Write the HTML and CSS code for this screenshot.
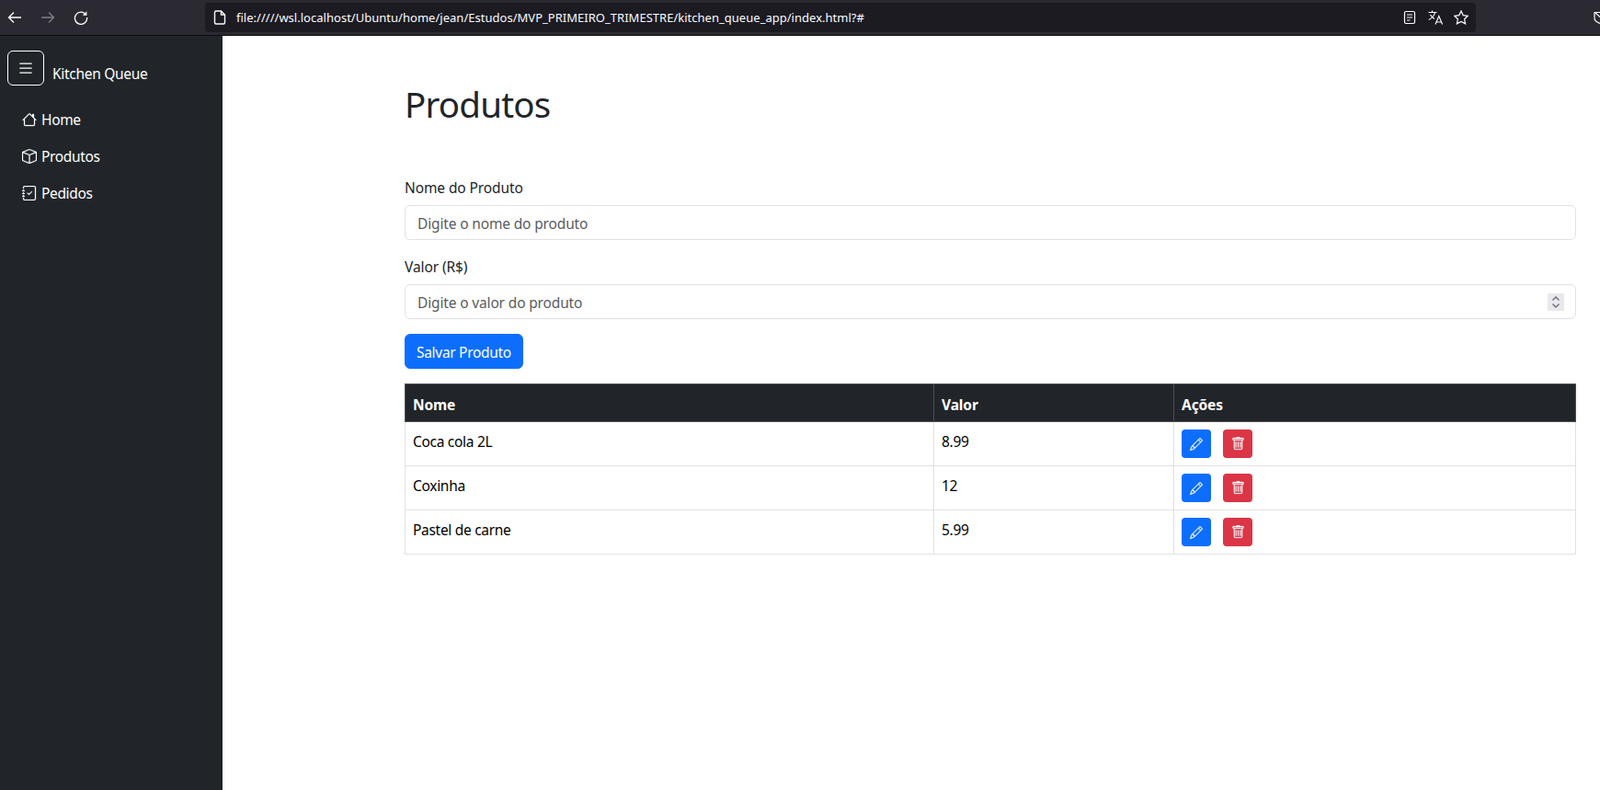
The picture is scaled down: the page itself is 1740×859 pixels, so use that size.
FILE: index.html
```html
<!DOCTYPE html>
<html lang="pt-BR">
<head>
    <meta charset="UTF-8">
    <title>Kitchen Queue</title>
    <link rel="stylesheet" href="styles.css">
</head>
<body>
    <header class="browser-bar">
        <div class="browser-nav">
            <svg class="nav-icon" viewBox="0 0 16 16" fill="none" stroke="currentColor" stroke-width="1.3"><path d="M15 8H1.5M7 2.5 1.5 8 7 13.5"/></svg>
            <svg class="nav-icon disabled" viewBox="0 0 16 16" fill="none" stroke="currentColor" stroke-width="1.3"><path d="M1 8h13.5M9 2.5 14.5 8 9 13.5"/></svg>
            <svg class="nav-icon" viewBox="0 0 16 16" fill="none" stroke="currentColor" stroke-width="1.3"><path d="M13.6 5.2A6.6 6.6 0 1 0 14.6 8"/><path d="M14.4 1.2v4.6H9.8z" fill="currentColor" stroke="none"/></svg>
        </div>
        <div class="url-bar">
            <svg class="page-icon" viewBox="0 0 16 16" fill="none" stroke="currentColor" stroke-width="1.4"><path d="M2.500 2.500a1.500 1.500 0 0 1 1.500-1.500h5.500L13.500 5v8.500a1.500 1.500 0 0 1-1.500 1.500H4a1.500 1.500 0 0 1-1.500-1.500z"/><path d="M9.500 1v4h4"/></svg>
            <span class="url-text">file://///wsl.localhost/Ubuntu/home/jean/Estudos/MVP_PRIMEIRO_TRIMESTRE/kitchen_queue_app/index.html?#</span>
            <div class="url-actions">
                <svg class="url-icon" viewBox="0 0 16 16" fill="none" stroke="currentColor" stroke-width="1.2"><rect x="2.500" y="1.500" width="11" height="13" rx="1.500"/><path d="M5 5h6M5 8h6M5 11h3.500"/></svg>
                <svg class="url-icon" viewBox="0 0 16 16" fill="none" stroke="currentColor" stroke-width="1.2"><path d="M0.500 2.500h9M4.500 0.500v2M7.500 2.500C6.800 6 4 9 0.800 10.500M2.500 5c1 2 2.500 3.500 4.500 4.500"/><path d="M8 15.500l3.800-9 3.800 9M9.300 13h5"/></svg>
                <svg class="url-icon" viewBox="0 0 16 16" fill="none" stroke="currentColor" stroke-width="1.2"><path d="M8 .9l2.200 4.700 5.100.7-3.700 3.500 1 5.100L8 12.400l-4.600 2.500 1-5.100L.7 6.300l5.100-.7z"/></svg>
            </div>
        </div>
        <svg class="shield-icon" viewBox="0 0 16 16" fill="none" stroke="currentColor" stroke-width="1.2"><path d="M2 2.500h12v6c0 3-3 5-6 6-3-1-6-3-6-6z"/><path d="M3 3l10 9"/></svg>
    </header>

    <div class="app">
        <aside class="sidebar">
            <div class="brand-row">
                <button class="toggler">
                    <svg viewBox="0 0 16 16" fill="currentColor"><path fill-rule="evenodd" d="M2.500 12a.5.5 0 0 1 .5-.5h10a.5.5 0 0 1 0 1H3a.5.5 0 0 1-.5-.5m0-4a.5.5 0 0 1 .5-.5h10a.5.5 0 0 1 0 1H3a.5.5 0 0 1-.5-.5m0-4a.5.5 0 0 1 .5-.5h10a.5.5 0 0 1 0 1H3a.5.5 0 0 1-.5-.5"/></svg>
                </button>
                <span class="brand">Kitchen Queue</span>
            </div>
            <nav class="side-nav">
                <a href="#" class="side-link">
                    <svg class="bi" viewBox="0 0 16 16" fill="currentColor"><path d="M8.707 1.500a1 1 0 0 0-1.414 0L.646 8.146a.5.5 0 0 0 .708.708L2 8.207V13.500A1.500 1.500 0 0 0 3.500 15h9a1.500 1.500 0 0 0 1.500-1.500V8.207l.646.647a.5.5 0 0 0 .708-.708L13 5.793V2.500a.5.5 0 0 0-.5-.5h-1a.5.5 0 0 0-.5.5v1.293zM13 7.207V13.500a.5.5 0 0 1-.5.5h-9a.5.5 0 0 1-.5-.5V7.207l5-5z"/></svg>
                    Home
                </a>
                <a href="#" class="side-link">
                    <svg class="bi" viewBox="0 0 16 16" fill="currentColor"><path d="M8.186 1.113a.5.5 0 0 0-.372 0L1.846 3.500 8 5.961 14.154 3.500zM15 4.239l-6.500 2.600v7.922l6.500-2.600V4.240zM7.500 14.762V6.838L1 4.239v7.925zM7.443.184a1.500 1.500 0 0 1 1.114 0l7.129 2.852A.5.5 0 0 1 16 3.500v8.662a1 1 0 0 1-.629.928l-7.185 2.874a.5.5 0 0 1-.372 0L.63 13.090a1 1 0 0 1-.63-.928V3.500a.5.5 0 0 1 .314-.464z"/></svg>
                    Produtos
                </a>
                <a href="#" class="side-link">
                    <svg class="bi" viewBox="0 0 16 16" fill="currentColor"><path fill-rule="evenodd" d="M10.854 6.146a.5.5 0 0 1 0 .708l-3 3a.5.5 0 0 1-.708 0l-1.500-1.500a.5.5 0 1 1 .708-.708L7.500 8.793l2.646-2.647a.5.5 0 0 1 .708 0"/><path d="M3 0h10a2 2 0 0 1 2 2v12a2 2 0 0 1-2 2H3a2 2 0 0 1-2-2v-1h1v1a1 1 0 0 0 1 1h10a1 1 0 0 0 1-1V2a1 1 0 0 0-1-1H3a1 1 0 0 0-1 1v1H1V2a2 2 0 0 1 2-2"/><path d="M1 5v-.5a.5.5 0 0 1 1 0V5h.5a.5.5 0 0 1 0 1h-2a.5.5 0 0 1 0-1zm0 3v-.5a.5.5 0 0 1 1 0V8h.5a.5.5 0 0 1 0 1h-2a.5.5 0 0 1 0-1zm0 3v-.5a.5.5 0 0 1 1 0v.5h.5a.5.5 0 0 1 0 1h-2a.5.5 0 0 1 0-1z"/></svg>
                    Pedidos
                </a>
            </nav>
        </aside>

        <main class="content">
            <h1 class="page-title">Produtos</h1>
            <form class="product-form">
                <div class="field">
                    <label class="field-label" for="nome">Nome do Produto</label>
                    <input class="field-input" id="nome" type="text" placeholder="Digite o nome do produto">
                </div>
                <div class="field">
                    <label class="field-label" for="valor">Valor (R$)</label>
                    <div class="input-wrap">
                        <input class="field-input" id="valor" type="text" placeholder="Digite o valor do produto">
                        <span class="spinner">
                            <svg viewBox="0 0 18 18" fill="none" stroke="#6c6c78" stroke-width="1.4"><path d="M5.500 7 9 3.500 12.500 7M5.500 11 9 14.500 12.500 11"/></svg>
                        </span>
                    </div>
                </div>
                <button class="btn-save" type="button">Salvar Produto</button>
            </form>

            <table class="product-table">
                <thead>
                    <tr>
                        <th class="col-name">Nome</th>
                        <th class="col-value">Valor</th>
                        <th>Ações</th>
                    </tr>
                </thead>
                <tbody id="rows"></tbody>
            </table>
        </main>
    </div>

    <script>
        let produtos = [
            { nome: 'Coca cola 2L', valor: '8.99' },
            { nome: 'Coxinha', valor: '12' },
            { nome: 'Pastel de carne', valor: '5.99' }
        ];

        let pencil = '<svg class="bi" viewBox="0 0 16 16" fill="currentColor"><path d="M12.146.146a.5.5 0 0 1 .708 0l3 3a.5.5 0 0 1 0 .708l-10 10a.5.5 0 0 1-.168.11l-5 2a.5.5 0 0 1-.65-.65l2-5a.5.5 0 0 1 .11-.168zM11.207 2.500 13.500 4.793 14.793 3.500 12.500 1.207zm1.586 3L10.500 3.207 4 9.707V10h.5a.5.5 0 0 1 .5.5v.5h.5a.5.5 0 0 1 .5.5v.5h.293zm-9.761 5.175-.106.106-1.528 3.821 3.821-1.528.106-.106A.5.5 0 0 1 5 12.500V12h-.5a.5.5 0 0 1-.5-.5V11h-.5a.5.5 0 0 1-.468-.325"/></svg>';
        let trash = '<svg class="bi" viewBox="0 0 16 16" fill="currentColor"><path d="M5.500 5.500A.5.5 0 0 1 6 6v6a.5.5 0 0 1-1 0V6a.5.5 0 0 1 .5-.5m2.500 0a.5.5 0 0 1 .5.5v6a.5.5 0 0 1-1 0V6a.5.5 0 0 1 .5-.5m3 .5a.5.5 0 0 0-1 0v6a.5.5 0 0 0 1 0z"/><path d="M14.500 3a1 1 0 0 1-1 1H13v9a2 2 0 0 1-2 2H5a2 2 0 0 1-2-2V4h-.5a1 1 0 0 1-1-1V2a1 1 0 0 1 1-1H6a1 1 0 0 1 1-1h2a1 1 0 0 1 1 1h3.500a1 1 0 0 1 1 1zM4.118 4 4 4.059V13a1 1 0 0 0 1 1h6a1 1 0 0 0 1-1V4.059L11.882 4zM2.500 3h11V2h-11z"/></svg>';

        let rows = document.getElementById('rows');
        for (let p of produtos) {
            let tr = document.createElement('tr');
            tr.innerHTML = `
                <td>${p.nome}</td>
                <td>${p.valor}</td>
                <td class="cell-actions">
                    <div class="actions">
                        <button class="btn-icon btn-edit" type="button">${pencil}</button>
                        <button class="btn-icon btn-delete" type="button">${trash}</button>
                    </div>
                </td>
            `;
            rows.appendChild(tr);
        }
    </script>
</body>
</html>
```
FILE: styles.css
```css
* {
    box-sizing: border-box;
}
body {
    margin: 0;
    height: 859px;
    overflow: hidden;
    display: flex;
    flex-direction: column;
    font-family: 'Noto Sans', sans-serif;
    font-size: 15.5px;
    letter-spacing: -0.1px;
    color: #212529;
    background: #fff;
}
.browser-bar {
    height: 39px;
    flex: none;
    display: flex;
    align-items: center;
    background: #2b2a33;
    border-bottom: 1px solid #0c0c0d;
    color: #fbfbfe;
    padding-bottom: 1px;
}
.browser-nav {
    width: 223px;
    flex: none;
    display: flex;
    gap: 20px;
    padding-left: 8px;
}
.nav-icon {
    width: 16px;
    height: 16px;
}
.nav-icon.disabled {
    opacity: 0.4;
}
.url-bar {
    width: 1382px;
    height: 32px;
    flex: none;
    display: flex;
    align-items: center;
    background: #1c1b22;
    border-radius: 4px;
    padding: 0 8px;
}
.page-icon {
    width: 16px;
    height: 16px;
    margin-right: 10px;
    flex: none;
}
.url-text {
    font-size: 13px;
    letter-spacing: 0.02px;
    color: #fbfbfe;
    white-space: nowrap;
}
.url-actions {
    margin-left: auto;
    display: flex;
    gap: 12px;
}
.url-icon {
    width: 16px;
    height: 16px;
}
.shield-icon {
    width: 16px;
    height: 16px;
    margin-left: 127px;
    flex: none;
}
.app {
    flex: 1;
    display: flex;
    min-height: 0;
}
.sidebar {
    width: 242px;
    flex: none;
    background: #212529;
    color: #fff;
    padding: 16px 8px;
}
.brand-row {
    display: flex;
    align-items: flex-end;
    gap: 9px;
    margin-bottom: 17px;
}
.toggler {
    width: 40px;
    height: 38px;
    display: flex;
    align-items: center;
    justify-content: center;
    padding: 0;
    background: none;
    border: 1px solid #fff;
    border-radius: 6px;
    color: #fff;
}
.toggler svg {
    width: 20px;
    height: 20px;
}
.brand {
    line-height: 24px;
    margin-bottom: 1px;
    letter-spacing: -0.3px;
}
.side-nav {
    display: flex;
    flex-direction: column;
}
.side-link {
    height: 40px;
    display: flex;
    align-items: center;
    gap: 5px;
    padding-left: 16px;
    color: #fff;
    text-decoration: none;
    letter-spacing: -0.35px;
}
.bi {
    width: 16px;
    height: 16px;
    flex: none;
    stroke: currentColor;
    stroke-width: 0.25;
}
.content {
    flex: 1;
    padding: 47px 26px 0 198px;
}
.page-title {
    margin: 0 0 51px;
    font-size: 38.5px;
    letter-spacing: -0.8px;
    font-weight: 400;
    line-height: 54px;
}
.field {
    margin-bottom: 16px;
}
.field-label {
    display: block;
    margin-bottom: 7px;
    padding-top: 1px;
    line-height: 24px;
}
.field-input {
    display: block;
    width: 100%;
    height: 38px;
    padding: 7px 12px 5px 13px;
    font: inherit;
    letter-spacing: -0.15px;
    color: #212529;
    background: #fff;
    border: 1px solid #dee2e6;
    border-radius: 6px;
}
.field-input::placeholder {
    color: #595c5f;
    opacity: 1;
}
.input-wrap {
    position: relative;
}
.spinner {
    position: absolute;
    top: 10px;
    right: 13px;
    width: 18px;
    height: 19px;
    background: #e9e9ed;
}
.spinner svg {
    display: block;
    width: 18px;
    height: 19px;
}
.btn-save {
    display: block;
    height: 38px;
    padding: 2px 12px 0;
    font: inherit;
    letter-spacing: -0.3px;
    color: #fff;
    background: #0d6efd;
    border: 1px solid #0d6efd;
    border-radius: 6px;
    margin-bottom: 16px;
}
.product-table {
    width: 100%;
    border-collapse: collapse;
    table-layout: fixed;
    color: #000;
}
.product-table th,
.product-table td {
    padding: 10px 8px 6px;
    border: 1px solid #dee2e6;
    text-align: left;
    vertical-align: top;
}
.product-table th {
    height: 41px;
    background: #212529;
    color: #fff;
    border-color: #4d5154;
    font-weight: 700;
    line-height: 24px;
}
.product-table td {
    height: 48px;
    letter-spacing: -0.3px;
}
.product-table .cell-actions {
    padding-top: 8px;
}
.col-name {
    width: 575px;
}
.col-value {
    width: 261px;
}
.actions {
    display: flex;
    gap: 13px;
}
.btn-icon {
    width: 32px;
    height: 31px;
    display: flex;
    align-items: center;
    justify-content: center;
    padding: 0;
    border: none;
    border-radius: 4px;
    color: #fff;
}
.btn-icon .bi {
    width: 14px;
    height: 14px;
}
.btn-edit {
    background: #0d6efd;
}
.btn-delete {
    background: #dc3545;
}
.btn-delete .bi {
    width: 15px;
    height: 15px;
}
```
